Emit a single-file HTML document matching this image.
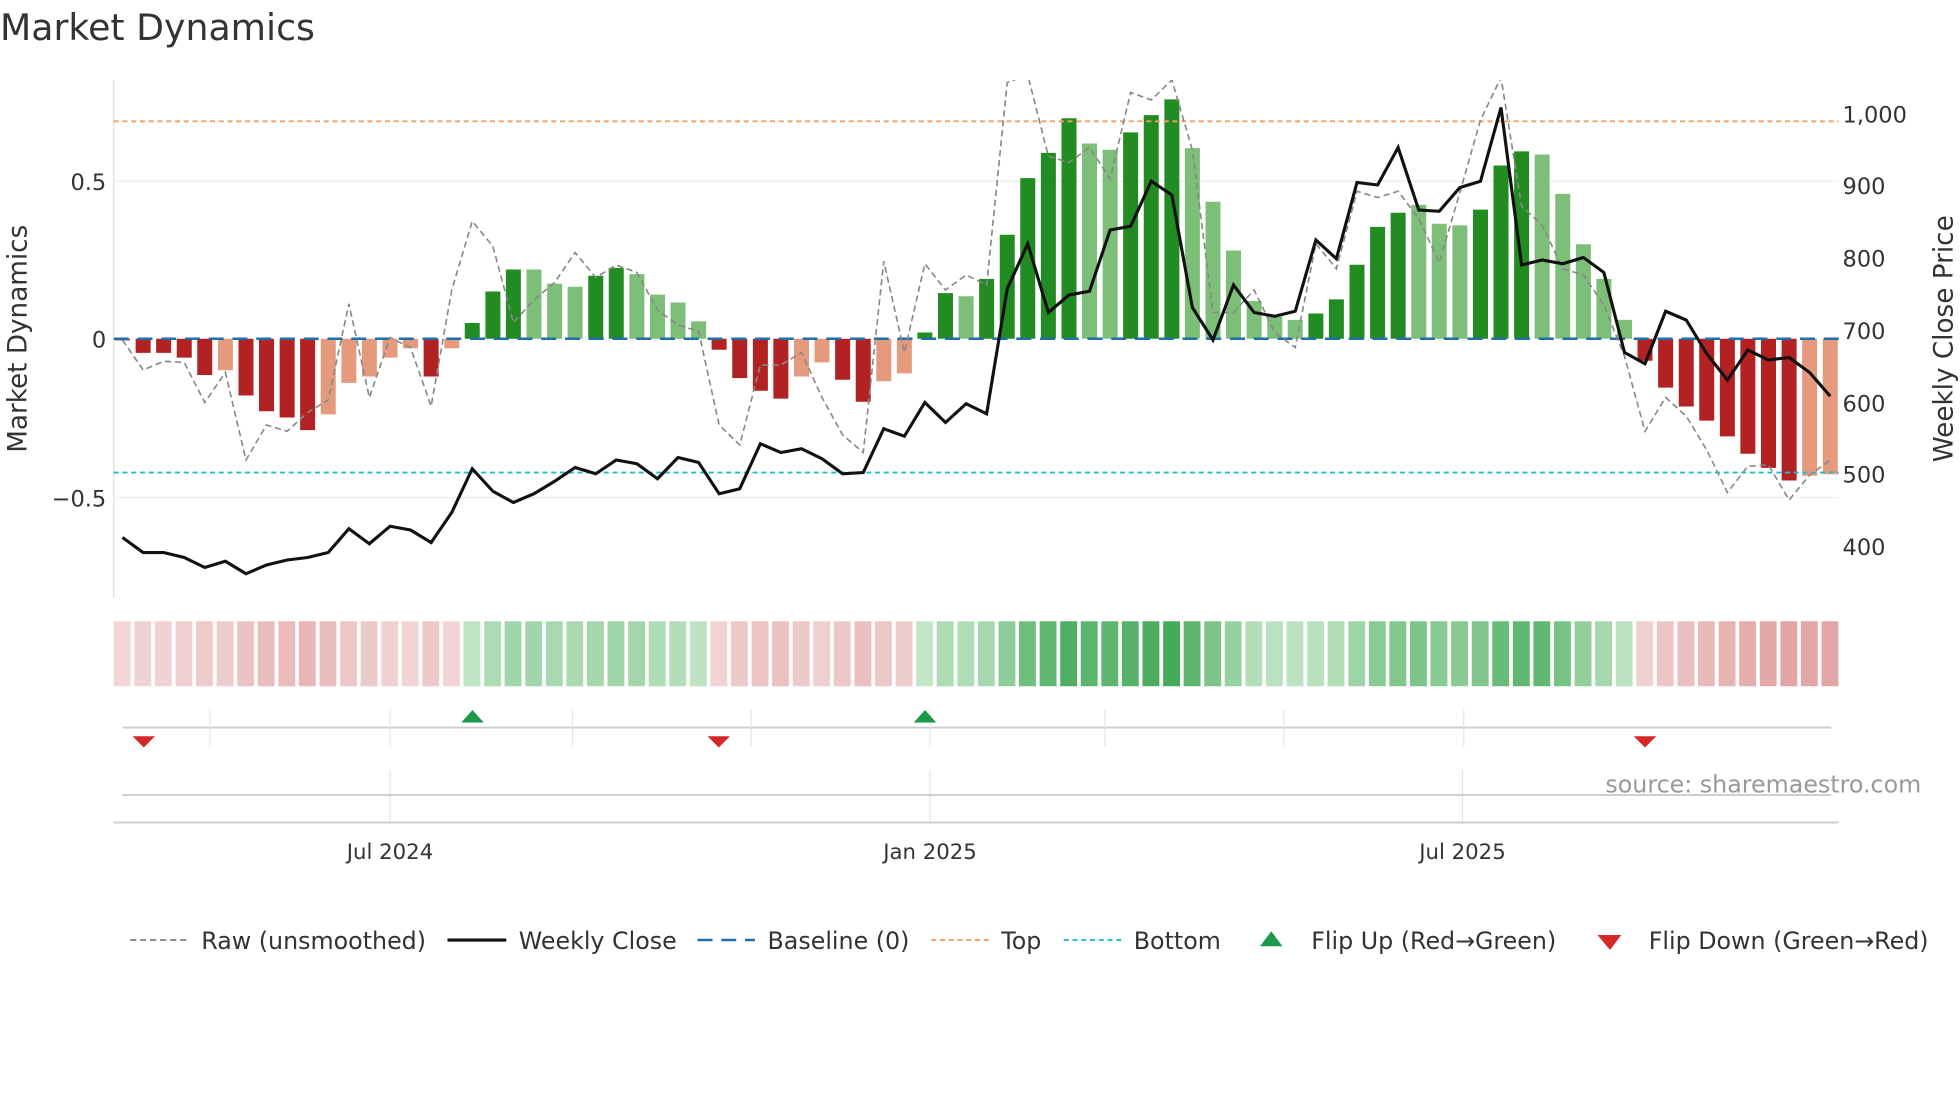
<!DOCTYPE html>
<html><head><meta charset="utf-8"><style>
html,body{margin:0;padding:0;background:#fff;}
svg{display:block;font-family:"DejaVu Sans","Liberation Sans",sans-serif;}
</style></head><body>
<svg id="s" width="1960" height="1102" viewBox="0 0 1568 881.6" xmlns="http://www.w3.org/2000/svg">
<defs><clipPath id="cp"><rect x="91" y="64" width="1380" height="414"/></clipPath></defs>
<rect width="1568" height="882" fill="#fff"/>
<text x="0" y="32" font-size="29" fill="#333">Market Dynamics</text>
<line x1="91" y1="64" x2="91" y2="478" stroke="#ddd" stroke-width="1"/>
<line x1="91" y1="145" x2="1471" y2="145" stroke="#eee"/>
<line x1="91" y1="398" x2="1471" y2="398" stroke="#eee"/>
<g id="bars"></g>
<line x1="91" y1="271" x2="1471" y2="271" stroke="#1f6fa8" stroke-width="2" stroke-dasharray="12,7"/>
<line x1="91" y1="97" x2="1471" y2="97" stroke="#f0a060" stroke-width="1.5" stroke-dasharray="4,3"/>
<line x1="91" y1="378" x2="1471" y2="378" stroke="#22bcd0" stroke-width="1.5" stroke-dasharray="4,3"/>
<polyline id="raw" clip-path="url(#cp)" fill="none" stroke="#888" stroke-width="1.3" stroke-dasharray="5,3"/>
<polyline id="px" fill="none" stroke="#111" stroke-width="2.5"/>
<g font-size="18" fill="#333" text-anchor="end">
<text x="85" y="152">0.5</text><text x="85" y="278">0</text><text x="85" y="405">−0.5</text></g>
<g font-size="18" fill="#333">
<text x="1474" y="98">1,000</text><text x="1474" y="155">900</text><text x="1474" y="213">800</text><text x="1474" y="271">700</text><text x="1474" y="329">600</text><text x="1474" y="386">500</text><text x="1474" y="444">400</text></g>
<text transform="translate(21,271) rotate(-90)" font-size="21" fill="#333" text-anchor="middle">Market Dynamics</text>
<text transform="translate(1562,271) rotate(-90)" font-size="21" fill="#333" text-anchor="middle">Weekly Close Price</text>
<g id="heat"></g>
<line x1="98" y1="582" x2="1465" y2="582" stroke="#ccc" stroke-width="1.5"/>
<g stroke="#e4e4e4" stroke-width="1">
<line x1="168" y1="568" x2="168" y2="597"/><line x1="312" y1="568" x2="312" y2="597"/><line x1="458" y1="568" x2="458" y2="597"/><line x1="601" y1="568" x2="601" y2="597"/><line x1="744" y1="568" x2="744" y2="597"/><line x1="884" y1="568" x2="884" y2="597"/><line x1="1027" y1="568" x2="1027" y2="597"/><line x1="1171" y1="568" x2="1171" y2="597"/>
<line x1="312" y1="616" x2="312" y2="658"/><line x1="744" y1="616" x2="744" y2="658"/><line x1="1170" y1="616" x2="1170" y2="658"/></g>
<g fill="#1a9a4a"><polygon points="369,578 378,568 387,578"/><polygon points="731,578 740,568 749,578"/></g>
<g fill="#d62728"><polygon points="106,589 124,589 115,598"/><polygon points="566,589 584,589 575,598"/><polygon points="1307,589 1325,589 1316,598"/></g>
<line x1="98" y1="636" x2="1465" y2="636" stroke="#ccc" stroke-width="1.5"/>
<line x1="91" y1="658" x2="1471" y2="658" stroke="#ccc" stroke-width="1.5"/>
<text x="1537" y="634" font-size="19" fill="#999" text-anchor="end">source: sharemaestro.com</text>
<g font-size="17" fill="#333" text-anchor="middle">
<text x="312" y="687">Jul 2024</text><text x="744" y="687">Jan 2025</text><text x="1170" y="687">Jul 2025</text></g>
<g font-size="19" fill="#333">
<line x1="104" y1="752" x2="150" y2="752" stroke="#888" stroke-width="1.5" stroke-dasharray="5,3"/><text x="161" y="759">Raw (unsmoothed)</text>
<line x1="358" y1="752" x2="405" y2="752" stroke="#111" stroke-width="2.5"/><text x="415" y="759">Weekly Close</text>
<line x1="558" y1="752" x2="604" y2="752" stroke="#1f6fa8" stroke-width="2" stroke-dasharray="12,7"/><text x="614" y="759">Baseline (0)</text>
<line x1="745" y1="752" x2="791" y2="752" stroke="#f0a060" stroke-width="1.5" stroke-dasharray="4,3"/><text x="801" y="759">Top</text>
<line x1="851" y1="752" x2="897" y2="752" stroke="#22bcd0" stroke-width="1.5" stroke-dasharray="4,3"/><text x="907" y="759">Bottom</text>
<polygon points="1008,757 1017,745 1026,757" fill="#1a9a4a"/><text x="1049" y="759">Flip Up (Red→Green)</text>
<polygon points="1278,748 1297,748 1288,760" fill="#d62728"/><text x="1319" y="759">Flip Down (Green→Red)</text></g>
</svg>
<script>
var v=[-0.005,-0.045,-0.045,-0.06,-0.115,-0.1,-0.18,-0.23,-0.25,-0.29,-0.24,-0.14,-0.12,-0.06,-0.03,-0.12,-0.03,0.05,0.15,0.22,0.22,0.175,0.165,0.2,0.225,0.205,0.14,0.115,0.055,-0.035,-0.125,-0.165,-0.19,-0.12,-0.075,-0.13,-0.2,-0.135,-0.11,0.02,0.145,0.135,0.19,0.33,0.51,0.59,0.70,0.62,0.60,0.655,0.71,0.76,0.605,0.435,0.28,0.12,0.07,0.06,0.08,0.125,0.235,0.355,0.40,0.425,0.365,0.36,0.41,0.55,0.595,0.585,0.46,0.30,0.19,0.06,-0.07,-0.155,-0.215,-0.26,-0.31,-0.365,-0.41,-0.45,-0.435,-0.43];
var L={5:1,10:1,11:1,12:1,13:1,14:1,16:1,20:1,21:1,22:1,25:1,26:1,27:1,28:1,33:1,34:1,37:1,38:1,41:1,47:1,48:1,52:1,53:1,54:1,55:1,56:1,57:1,63:1,64:1,65:1,69:1,70:1,71:1,72:1,73:1,82:1,83:1};
var b='',h='';
for(var i=0;i<v.length;i++){var x=98+16.46*i,val=v[i],y0=271,y1=271-val*252;
var c=val>=0?(L[i]?'#7dbf78':'#228b22'):(L[i]?'#e59a7e':'#b22222');
b+='<rect x="'+(x-6).toFixed(1)+'" y="'+Math.min(y0,y1).toFixed(1)+'" width="12" height="'+Math.abs(y1-y0).toFixed(1)+'" fill="'+c+'"/>';
var t=Math.min(1,Math.abs(val)/0.75),col;
if(val>=0){col='rgb('+Math.round(198-(198-70)*t)+','+Math.round(232-(232-170)*t)+','+Math.round(202-(202-90)*t)+')';}
else{col='rgb('+Math.round(242-(242-215)*t)+','+Math.round(215-(215-130)*t)+','+Math.round(215-(215-130)*t)+')';}
h+='<rect x="'+(x-7).toFixed(1)+'" y="497" width="13.5" height="52" fill="'+col+'"/>';}
document.getElementById('bars').innerHTML=b;document.getElementById('heat').innerHTML=h;
var p=[430,442,442,446,454,449,459,452,448,446,442,423,435,421,424,434,410,375,393,402,395,385,374,379,368,371,383,366,370,395,391,355,362,359,367,379,378,343,349,322,338,323,331,231,195,250,236,233,184,181,145,156,246,272,228,250,253,249,192,207,146,148,118,168,169,150,145,86,212,208,211,206,218,282,291,249,256,283,304,280,288,286,298,317];
var r=[272,296,289,290,322,298,368,340,345,330,320,243,318,270,278,325,232,177,197,258,240,226,202,222,212,218,248,260,265,340,356,292,292,282,318,348,362,209,282,211,232,220,228,66,60,125,130,118,143,74,80,64,120,250,250,232,266,278,195,215,153,158,153,175,210,154,96,62,165,180,215,220,244,285,345,318,333,360,394,373,372,400,380,368];
function pts(a){return a.map(function(y,i){return (98+16.46*i).toFixed(1)+','+y}).join(' ');}
document.getElementById('px').setAttribute('points',pts(p));
document.getElementById('raw').setAttribute('points',pts(r));
</script>
</body></html>
